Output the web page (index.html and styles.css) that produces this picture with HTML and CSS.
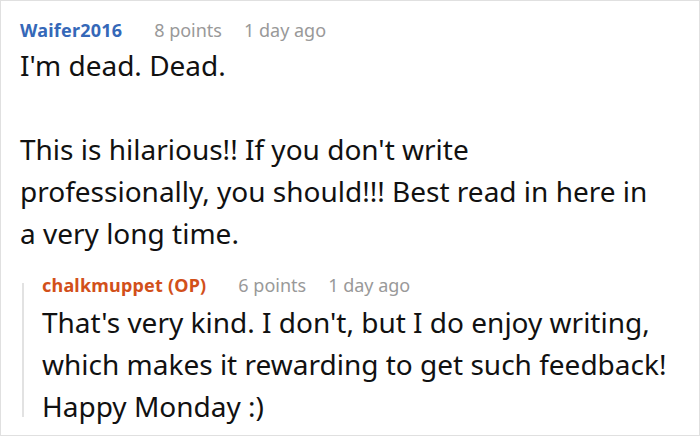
FILE: index.html
```html
<!DOCTYPE html>
<html lang="en">

<head>
	<meta charset="UTF-8">
	<meta name="viewport" content="width=device-width, initial-scale=1.0">
	<title>Comments</title>
	<link rel="stylesheet" href="styles.css">
</head>

<body>
	<div class="thread">
		<div class="comment">
			<div class="meta">
				<span class="author">Waifer2016</span>
				<span class="points">8 points</span>
				<span class="time">1 day ago</span>
			</div>
			<div class="text">
				<p>I'm dead. Dead.</p>
				<p>This is hilarious!! If you don't write professionally, you should!!! Best read in here in a very long time.</p>
			</div>
		</div>
		<div class="reply">
			<div class="meta">
				<span class="author op">chalkmuppet (OP)</span>
				<span class="points">6 points</span>
				<span class="time">1 day ago</span>
			</div>
			<div class="text">
				<p>That's very kind. I don't, but I do enjoy writing, which makes it rewarding to get such feedback! Happy Monday :)</p>
			</div>
		</div>
	</div>
</body>

</html>
```

FILE: styles.css
```css
body {
	margin: 0;
	font-family: "Noto Sans", "Open Sans", sans-serif;
}

p {
	margin: 0;
}

.thread {
	box-sizing: border-box;
	width: 700px;
	height: 436px;
	border: 1px solid #e0e0e0;
	padding: 17px 18px 0 19px;
}

.meta {
	display: flex;
	gap: 22px;
	font-size: 18px;
	line-height: 24px;
	color: #999;
}

.author {
	font-weight: bold;
	color: #3568b8;
	margin-right: 10px;
	letter-spacing: 0.2px;
}

.author.op {
	color: #d2501a;
}

.text {
	margin-top: 2px;
	font-size: 28px;
	line-height: 42px;
	color: #111;
}

.comment .text {
	max-width: 636px;
}

.text p + p {
	margin-top: 42px;
}

.reply {
	margin-top: 19px;
	margin-left: 2px;
	padding-left: 20px;
	/* thin grey thread line */
	background: linear-gradient(#e2e2e2, #e2e2e2) no-repeat 0 10px / 2px calc(100% - 20px);
}

.reply .text {
	margin-top: 4px;
}
```
